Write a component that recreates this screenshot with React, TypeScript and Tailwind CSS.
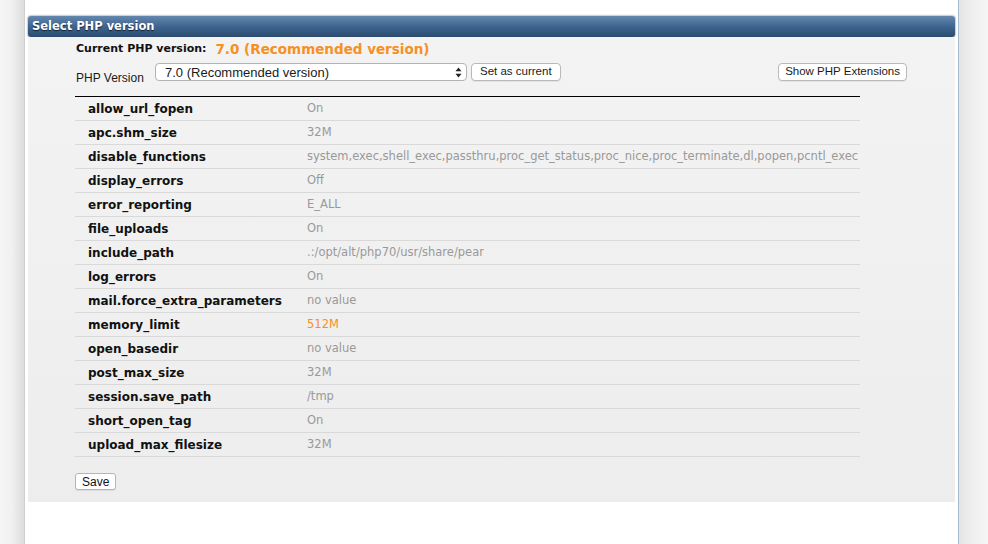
import React from 'react';

const settings: { name: string; value: string; highlight?: boolean }[] = [
  { name: 'allow_url_fopen', value: 'On' },
  { name: 'apc.shm_size', value: '32M' },
  {
    name: 'disable_functions',
    value: 'system,exec,shell_exec,passthru,proc_get_status,proc_nice,proc_terminate,dl,popen,pcntl_exec',
  },
  { name: 'display_errors', value: 'Off' },
  { name: 'error_reporting', value: 'E_ALL' },
  { name: 'file_uploads', value: 'On' },
  { name: 'include_path', value: '.:/opt/alt/php70/usr/share/pear' },
  { name: 'log_errors', value: 'On' },
  { name: 'mail.force_extra_parameters', value: 'no value' },
  { name: 'memory_limit', value: '512M', highlight: true },
  { name: 'open_basedir', value: 'no value' },
  { name: 'post_max_size', value: '32M' },
  { name: 'session.save_path', value: '/tmp' },
  { name: 'short_open_tag', value: 'On' },
  { name: 'upload_max_filesize', value: '32M' },
];

const verdana = "font-['DejaVu_Sans',Verdana,sans-serif]";
const helv = "font-['Liberation_Sans',Arial,sans-serif]";

const MacButton = ({ children, className = '' }: { children: React.ReactNode; className?: string }) => (
  <button
    className={`flex h-[18px] items-center rounded-[4px] border border-[#b9b9b9] bg-white text-[11.5px] leading-none text-[#1a1a1a] shadow-[0_1px_0_rgba(0,0,0,0.06)] ${helv} ${className}`}
  >
    {children}
  </button>
);

const SelectBox = () => (
  <div
    className={`flex h-[18px] w-[312px] items-center justify-between rounded-[4px] border border-[#b3b3b3] bg-white pl-[9px] pr-[4px] text-[13px] leading-none text-[#1a1a1a] ${helv}`}
  >
    <span>7.0 (Recommended version)</span>
    <svg width="7" height="11" viewBox="0 0 7 11">
      <path d="M3.5 0.5 L6.5 4.3 L0.5 4.3 Z" fill="#222" />
      <path d="M3.5 10.5 L6.5 6.7 L0.5 6.7 Z" fill="#222" />
    </svg>
  </div>
);

export default function App() {
  return (
    <div className="flex h-[544px] w-[988px] overflow-hidden bg-[#f4f4f4]">
      <div className="w-[24px] shrink-0 bg-gradient-to-r from-[#f5f5f5] via-[#f0f0f0] to-[#dcdcdc]" />
      <div className="flex w-[935px] shrink-0 flex-col border-l border-r border-l-[#cfcfcf] border-r-[#a7bbcf] bg-white px-[3px] pt-[16px]">
        <div className="rounded-[3px] bg-gradient-to-b from-[#6487ad] via-[#3f6690] to-[#2b4b6f] px-[4px] shadow-[0_0_2px_rgba(0,0,0,0.7)]">
          <div
            className={`flex h-[21px] items-center text-[11.5px] font-bold text-white [text-shadow:0_1px_1px_rgba(0,0,0,0.7)] ${verdana}`}
          >
            Select PHP version
          </div>
        </div>
        <div className="h-[465px] bg-gradient-to-b from-[#f3f3f3] to-[#ededed] pl-[47px] pt-[3px]">
          <div className={`flex h-[18px] items-center pl-[1px] ${verdana}`}>
            <span className="text-[11px] font-bold text-[#111]">Current PHP version:</span>
            <span className="ml-[9px] text-[13.5px] font-bold text-[#f7901e]">7.0 (Recommended version)</span>
          </div>
          <div className="mt-[5px] flex w-[832px] items-start pl-[1px]">
            <span className={`mt-[9px] w-[79px] text-[12px] leading-none text-[#1a1a1a] ${helv}`}>PHP Version</span>
            <SelectBox />
            <MacButton className="ml-[4px] px-[8px]">Set as current</MacButton>
            <MacButton className="ml-auto px-[6px]">Show PHP Extensions</MacButton>
          </div>
          <div className="mt-[12px] w-[785px] border-t border-black">
            {settings.map((s) => (
              <div key={s.name} className="flex h-[24px] items-center border-b border-[#d9d9d9]">
                <div className={`w-[232px] shrink-0 pl-[13px] text-[12px] font-bold text-[#111] ${verdana}`}>
                  {s.name}
                </div>
                <div
                  className={`overflow-hidden whitespace-nowrap text-[11.5px] ${verdana} ${
                    s.highlight ? 'text-[#f7901e]' : 'text-[#999]'
                  }`}
                >
                  {s.value}
                </div>
              </div>
            ))}
          </div>
          <button
            className={`mt-[16px] flex h-[17px] items-center rounded-[3px] border border-[#b5b5b5] bg-white px-[6px] text-[12px] leading-none text-[#111] shadow-[0_1px_0_rgba(0,0,0,0.08)] ${helv}`}
          >
            Save
          </button>
        </div>
      </div>
      <div className="flex-1 bg-gradient-to-r from-[#e4e4e4] via-[#f0f0f0] to-[#f5f5f5]" />
    </div>
  );
}
